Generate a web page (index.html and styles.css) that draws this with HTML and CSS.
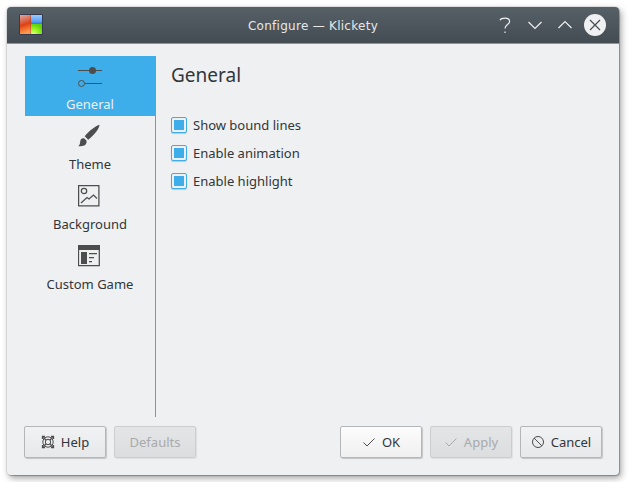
FILE: index.html
```html
<!DOCTYPE html>
<html lang="en">
<head>
<meta charset="utf-8">
<title>Configure — Klickety</title>
<link rel="stylesheet" href="styles.css">
</head>
<body>
<div class="window">
  <header class="titlebar">
    <svg class="app-icon" width="24" height="22" viewBox="0 0 24 22">
      <defs>
        <linearGradient id="red" x1="0" y1="0" x2="0.2" y2="1"><stop offset="0" stop-color="#e0a89a"/><stop offset=".45" stop-color="#d8593c"/><stop offset=".55" stop-color="#e0400f"/><stop offset="1" stop-color="#ff9a4c"/></linearGradient>
        <linearGradient id="blue" x1="0" y1="0" x2="0" y2="1"><stop offset="0" stop-color="#9cc8ff"/><stop offset=".7" stop-color="#5ba4f8"/><stop offset="1" stop-color="#2f78dc"/></linearGradient>
        <radialGradient id="green" cx=".2" cy="1" r="1"><stop offset="0" stop-color="#e4ff80"/><stop offset=".5" stop-color="#98f420"/><stop offset="1" stop-color="#5fd00a"/></radialGradient>
      </defs>
      <rect width="24" height="21" rx="1.5" fill="#343a50"/>
      <rect x="1" y="1" width="11" height="19" fill="url(#red)"/>
      <rect x="12" y="1" width="11" height="9" fill="url(#blue)"/>
      <rect x="12" y="10" width="11" height="10" fill="url(#green)"/>
      <path d="M11.500 1v19" stroke="#7a2c20" stroke-opacity=".3" fill="none"/>
    </svg>
    <h1 class="title">Configure — Klickety</h1>
    <div class="controls">
      <svg width="18" height="22" viewBox="0 0 18 22"><path d="M4 6.200C5 4 13.600 2.600 13.600 7.400C13.600 10.800 9 10.200 9 14.600M9 17.400v1.600" /></svg>
      <svg width="18" height="22" viewBox="0 0 18 22"><path d="M2.500 8l6.500 6.500 6.500-6.500"/></svg>
      <svg width="18" height="22" viewBox="0 0 18 22"><path d="M2.500 14l6.500-6.500 6.500 6.500"/></svg>
      <svg class="close" width="22" height="22" viewBox="0 0 22 22"><circle cx="11" cy="11" r="11"/><path d="M6 6l10 10M16 6L6 16"/></svg>
    </div>
  </header>
  <main class="content">
    <nav class="sidebar">
      <div class="item selected">
        <svg width="24" height="24" viewBox="0 0 24 24"><path d="M0 6.500h24M7 19.500h17" class="line"/><circle cx="14.500" cy="6.500" r="3.500" fill="#4d4d4d"/><circle cx="3.500" cy="19.500" r="3" class="line"/></svg>
        <span>General</span>
      </div>
      <div class="item">
        <svg width="24" height="24" viewBox="0 0 24 24"><path fill="#4d4d4d" d="M21.500.800C18.500 1.200 11 7 6.700 12.200L10.200 15.700C16 11.500 21.600 4.500 21.500.800ZM6 14.300C4 13.900 2.400 15 2.200 17.500C2.100 19.500 1.700 21.100.3 22.200C4.500 22.500 7.700 21.800 8.400 19.100C8.700 17.700 8.600 16.800 8.200 16.200Z"/></svg>
        <span>Theme</span>
      </div>
      <div class="item">
        <svg width="24" height="24" viewBox="0 0 24 24"><path class="frame" d="M.6 1.600h20.300v20.300h-20.300z"/><circle class="frame" cx="6" cy="7" r="2.700"/><path class="frame" d="M3 19l6-5.500 2 1.500 4.500-4 3.500 3.500"/></svg>
        <span>Background</span>
      </div>
      <div class="item">
        <svg width="24" height="24" viewBox="0 0 24 24"><path fill="#4d4d4d" d="M0 1h22v5H0zM3 8h6v12H3z"/><path class="frame" d="M.5 2v19.500h20.800V2M11 9.500h8M11 13.500h5M11 17.500h3"/></svg>
        <span>Custom Game</span>
      </div>
    </nav>
    <section class="page">
      <h2>General</h2>
      <div class="check"><i class="box"></i>Show bound lines</div>
      <div class="check"><i class="box"></i>Enable animation</div>
      <div class="check"><i class="box"></i>Enable highlight</div>
    </section>
  </main>
  <footer class="buttons">
    <div class="button help">
      <svg width="14" height="14" viewBox="0 0 14 14"><circle cx="7" cy="7" r="5.200"/><circle cx="7" cy="7" r="2.700"/><path stroke-width="1.300" d="M1.500 4v-2.500h2.500M10 1.500h2.500v2.500M12.500 10v2.500h-2.500M4 12.500h-2.500v-2.500M2.500 2.500l2.700 2.700M11.500 2.500l-2.700 2.700M2.500 11.500l2.700-2.700M11.500 11.500l-2.700-2.700"/></svg>
      Help</div>
    <div class="button disabled">Defaults</div>
    <div class="spacer"></div>
    <div class="button default">
      <svg width="14" height="14" viewBox="0 0 14 14"><path d="M1.500 7.500l3.500 3.500L12.500 3.500"/></svg>
      OK</div>
    <div class="button disabled">
      <svg width="14" height="14" viewBox="0 0 14 14"><path d="M1.500 7.500l3.500 3.500L12.500 3.500"/></svg>
      Apply</div>
    <div class="button">
      <svg width="14" height="14" viewBox="0 0 14 14"><circle cx="7" cy="7" r="5.500"/><path d="M3 3l8 8"/></svg>
      Cancel</div>
  </footer>
</div>
</body>
</html>
```
FILE: styles.css
```css
* { box-sizing: border-box; }
body {
  margin: 0;
  padding: 7px;
  background: #fff;
  color: #31363b;
  font: 13px/18px "Noto Sans", sans-serif;
}
svg { display: block; flex: none; fill: none; }
.window {
  display: flex;
  flex-direction: column;
  width: 612px;
  height: 468px;
  border-radius: 4px;
  background: #eff0f1;
  box-shadow: 0 0 0 1px rgba(0,0,0,.08), 1px 1px 1px rgba(0,0,0,.2), 2px 3px 7px rgba(0,0,0,.38);
}
.titlebar {
  display: flex;
  align-items: center;
  height: 37px;
  padding: 0 13px 0 12px;
  border-radius: 4px 4px 0 0;
  border-bottom: 1px solid #3daee9;
  background: linear-gradient(#566067, #444c53);
  color: #e6e8ea;
}
.title {
  flex: 1;
  margin: 0;
  padding: 2px 0 0 87px;
  text-align: center;
  font: 12px/18px "DejaVu Sans", sans-serif;
  letter-spacing: .27px;
}
.controls { display: flex; gap: 12px; align-items: center; }
.controls svg { stroke: #eff0f1; stroke-width: 1.200; }
.controls .close { margin-left: -2px; fill: #eff0f1; stroke: none; }
.controls .close path { stroke: #475057; stroke-width: 1.300; }
.content { display: flex; height: 374px; padding: 12px 18px 0; }
.sidebar {
  width: 131px;
  height: 361px;
  border-right: 1px solid #3daee9;
}
.item {
  display: flex;
  flex-direction: column;
  align-items: center;
  height: 60px;
  padding-top: 8px;
}
.item span { margin-top: 7px; }
.selected { background: #3daee9; color: #eff0f1; }
.line { stroke: #4d4d4d; stroke-width: 1; fill: none; }
.frame { stroke: #4d4d4d; stroke-width: 1.250; fill: none; }
.page { padding-left: 15px; }
.page h2 { margin: 5px 0 28px; font: 19px/28px "Noto Sans", sans-serif; }
.check { display: flex; align-items: center; height: 16px; margin-bottom: 12px; }
.box {
  width: 16px;
  height: 16px;
  margin-right: 6px;
  border: 1px solid #3daee9;
  border-radius: 2px;
  background: #3daee9 content-box;
  padding: 2px;
  box-shadow: 0 1px 1px rgba(0,0,0,.18);
}
.buttons { display: flex; gap: 8px; padding: 8px 17px 0; }
.spacer { flex: 1; }
.button {
  display: flex;
  align-items: center;
  justify-content: center;
  gap: 6px;
  width: 82px;
  height: 32px;
  border: 1px solid #b4b6b8;
  border-radius: 2px;
  background: linear-gradient(#f1f2f3, #e7e8ea);
  box-shadow: 1px 1px 1px rgba(0,0,0,.18);
}
.button svg { stroke: #4d4d4d; }
.default { background: linear-gradient(#fcfcfc, #f0f0f1); }
.disabled {
  border-color: #cccdcf;
  background: linear-gradient(#e4e5e7, #dcddde);
  color: #a8aaac;
  box-shadow: 1px 1px 1px rgba(0,0,0,.07);
}
.disabled svg { stroke: #a8aaac; }
```
